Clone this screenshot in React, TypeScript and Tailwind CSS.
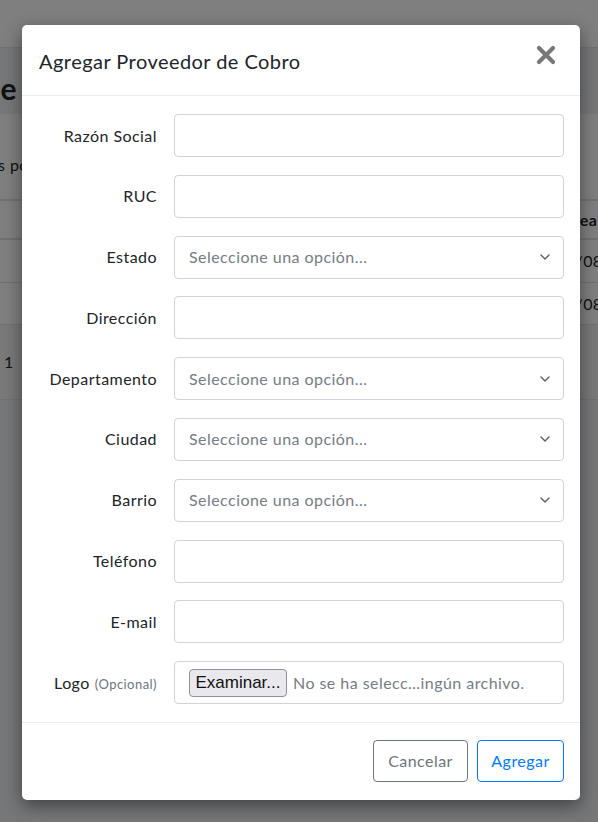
const labels: Array<{ label: string; kind: 'text' | 'select' | 'file'; optional?: boolean }> = [
  { label: 'Razón Social', kind: 'text' },
  { label: 'RUC', kind: 'text' },
  { label: 'Estado', kind: 'select' },
  { label: 'Dirección', kind: 'text' },
  { label: 'Departamento', kind: 'select' },
  { label: 'Ciudad', kind: 'select' },
  { label: 'Barrio', kind: 'select' },
  { label: 'Teléfono', kind: 'text' },
  { label: 'E-mail', kind: 'text' },
  { label: 'Logo', kind: 'file', optional: true },
];

function Chevron() {
  return (
    <svg width="10" height="6" viewBox="0 0 10 6" className="shrink-0">
      <path d="M1 1l4 4 4-4" fill="none" stroke="#5a5f66" strokeWidth="1.4" strokeLinecap="round" strokeLinejoin="round" />
    </svg>
  );
}

function Field({ kind }: { kind: 'text' | 'select' | 'file' }) {
  if (kind === 'select') {
    return (
      <div className="flex h-[43px] items-center justify-between rounded-[4px] border border-[#ced4da] bg-white pl-[14px] pr-[13px]">
        <span className="text-[16px] text-[#767d84]">Seleccione una opción...</span>
        <Chevron />
      </div>
    );
  }
  if (kind === 'file') {
    return (
      <div className="flex h-[43px] items-center gap-[6px] rounded-[4px] border border-[#ced4da] bg-white pl-[14px]">
        <span className="flex h-[28px] w-[98px] items-center justify-center rounded-[4px] border border-[#8f8f9d] bg-[#e9e9ed] font-['Liberation_Sans',sans-serif] text-[17px] tracking-normal text-[#111]">
          Examinar...
        </span>
        <span className="text-[16px] text-[#767d84]">No se ha selecc…ingún archivo.</span>
      </div>
    );
  }
  return <div className="h-[43px] rounded-[4px] border border-[#ced4da] bg-white" />;
}

function BackgroundPage() {
  return (
    <div className="flex h-full flex-col text-[#212529]">
      <div className="h-[48px] border-b border-[#dee2e6] bg-white" />
      <div className="flex flex-col pt-[18px]">
        <h1 className="-ml-[17px] text-[30px] leading-[44px] font-bold">de Cobro</h1>
        <div className="mt-[4px] bg-white pt-[39px]">
          <p className="-ml-[2px] text-[16px] leading-[24px]">s por página</p>
          <div className="mt-[22px] flex h-[41px] items-center border-y-2 border-[#dee2e6] pl-[557px] font-bold">
            Línea
          </div>
          <div className="flex h-[43px] items-center border-b border-[#dee2e6] pl-[556px]">24/08/2024</div>
          <div className="flex h-[42px] items-center border-b border-[#dee2e6] pl-[556px]">24/08/2024</div>
          <div className="flex h-[75px] items-center border-b border-[#dee2e6] bg-[#f2f2f2] pl-[4px]">1</div>
        </div>
      </div>
    </div>
  );
}

export default function App() {
  return (
    <div className="relative h-[822px] w-[598px] overflow-hidden bg-[#eceef1] font-['Lato',sans-serif] tracking-[0.45px]">
      <BackgroundPage />
      <div className="absolute inset-0 bg-black/50" />
      <div className="absolute left-[22px] top-[25px] w-[558px] rounded-[5px] bg-white shadow-[0_6px_18px_rgba(0,0,0,0.45)]">
        <div className="flex h-[71px] items-center justify-between border-b border-[#e9ecef] pl-[17px] pr-[24px]">
          <h5 className="mt-[2px] text-[20px] text-[#212529]">Agregar Proveedor de Cobro</h5>
          <svg width="20" height="20" viewBox="0 0 20 20" className="mt-[-10px]">
            <path d="M3 3l14 14M17 3L3 17" stroke="#777" strokeWidth="4.2" strokeLinecap="round" />
          </svg>
        </div>
        <div className="grid grid-cols-[119px_1fr] gap-x-[17px] gap-y-[17.8px] px-4 py-[18px]">
          {labels.map((f) => (
            <div key={f.label} className="contents">
              <label className="flex items-center justify-end text-[16px] text-[#212529]">
                <span>
                  {f.label}
                  {f.optional && <span className="ml-[5px] text-[13px] text-[#6c757d]">(Opcional)</span>}
                </span>
              </label>
              <Field kind={f.kind} />
            </div>
          ))}
        </div>
        <div className="flex justify-end gap-[9px] border-t border-[#e9ecef] px-4 pt-[17px] pb-[18px]">
          <button className="h-[42px] w-[95px] rounded-[4px] border border-[#6c757d] text-[16px] text-[#6c757d]">
            Cancelar
          </button>
          <button className="h-[42px] w-[87px] rounded-[4px] border border-[#007bff] text-[16px] text-[#007bff]">
            Agregar
          </button>
        </div>
      </div>
    </div>
  );
}
